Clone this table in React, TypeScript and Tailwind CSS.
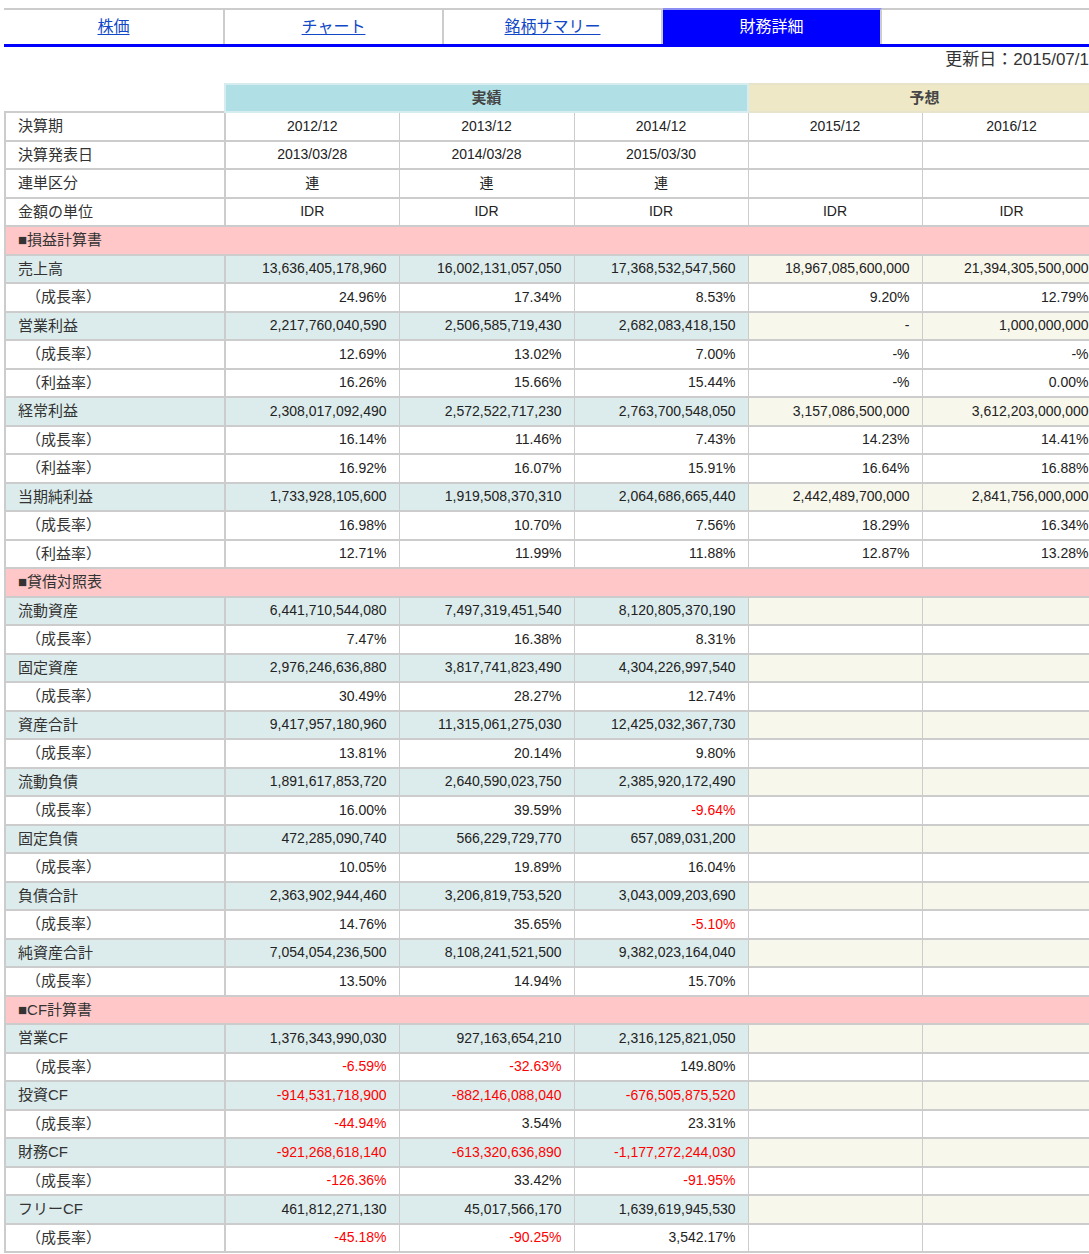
import React from "react";

type Row =
  | { kind: "head"; label: string; values: string[] }
  | { kind: "section"; label: string }
  | { kind: "main"; label: string; values: string[] }
  | { kind: "sub"; label: string; values: string[] };

const G = "（成長率）";
const P = "（利益率）";

const rows: Row[] = [
  { kind: "head", label: "決算期", values: ["2012/12", "2013/12", "2014/12", "2015/12", "2016/12"] },
  { kind: "head", label: "決算発表日", values: ["2013/03/28", "2014/03/28", "2015/03/30", "", ""] },
  { kind: "head", label: "連単区分", values: ["連", "連", "連", "", ""] },
  { kind: "head", label: "金額の単位", values: ["IDR", "IDR", "IDR", "IDR", "IDR"] },
  { kind: "section", label: "■損益計算書" },
  { kind: "main", label: "売上高", values: ["13,636,405,178,960", "16,002,131,057,050", "17,368,532,547,560", "18,967,085,600,000", "21,394,305,500,000"] },
  { kind: "sub", label: G, values: ["24.96%", "17.34%", "8.53%", "9.20%", "12.79%"] },
  { kind: "main", label: "営業利益", values: ["2,217,760,040,590", "2,506,585,719,430", "2,682,083,418,150", "-", "1,000,000,000"] },
  { kind: "sub", label: G, values: ["12.69%", "13.02%", "7.00%", "-%", "-%"] },
  { kind: "sub", label: P, values: ["16.26%", "15.66%", "15.44%", "-%", "0.00%"] },
  { kind: "main", label: "経常利益", values: ["2,308,017,092,490", "2,572,522,717,230", "2,763,700,548,050", "3,157,086,500,000", "3,612,203,000,000"] },
  { kind: "sub", label: G, values: ["16.14%", "11.46%", "7.43%", "14.23%", "14.41%"] },
  { kind: "sub", label: P, values: ["16.92%", "16.07%", "15.91%", "16.64%", "16.88%"] },
  { kind: "main", label: "当期純利益", values: ["1,733,928,105,600", "1,919,508,370,310", "2,064,686,665,440", "2,442,489,700,000", "2,841,756,000,000"] },
  { kind: "sub", label: G, values: ["16.98%", "10.70%", "7.56%", "18.29%", "16.34%"] },
  { kind: "sub", label: P, values: ["12.71%", "11.99%", "11.88%", "12.87%", "13.28%"] },
  { kind: "section", label: "■貸借対照表" },
  { kind: "main", label: "流動資産", values: ["6,441,710,544,080", "7,497,319,451,540", "8,120,805,370,190", "", ""] },
  { kind: "sub", label: G, values: ["7.47%", "16.38%", "8.31%", "", ""] },
  { kind: "main", label: "固定資産", values: ["2,976,246,636,880", "3,817,741,823,490", "4,304,226,997,540", "", ""] },
  { kind: "sub", label: G, values: ["30.49%", "28.27%", "12.74%", "", ""] },
  { kind: "main", label: "資産合計", values: ["9,417,957,180,960", "11,315,061,275,030", "12,425,032,367,730", "", ""] },
  { kind: "sub", label: G, values: ["13.81%", "20.14%", "9.80%", "", ""] },
  { kind: "main", label: "流動負債", values: ["1,891,617,853,720", "2,640,590,023,750", "2,385,920,172,490", "", ""] },
  { kind: "sub", label: G, values: ["16.00%", "39.59%", "-9.64%", "", ""] },
  { kind: "main", label: "固定負債", values: ["472,285,090,740", "566,229,729,770", "657,089,031,200", "", ""] },
  { kind: "sub", label: G, values: ["10.05%", "19.89%", "16.04%", "", ""] },
  { kind: "main", label: "負債合計", values: ["2,363,902,944,460", "3,206,819,753,520", "3,043,009,203,690", "", ""] },
  { kind: "sub", label: G, values: ["14.76%", "35.65%", "-5.10%", "", ""] },
  { kind: "main", label: "純資産合計", values: ["7,054,054,236,500", "8,108,241,521,500", "9,382,023,164,040", "", ""] },
  { kind: "sub", label: G, values: ["13.50%", "14.94%", "15.70%", "", ""] },
  { kind: "section", label: "■CF計算書" },
  { kind: "main", label: "営業CF", values: ["1,376,343,990,030", "927,163,654,210", "2,316,125,821,050", "", ""] },
  { kind: "sub", label: G, values: ["-6.59%", "-32.63%", "149.80%", "", ""] },
  { kind: "main", label: "投資CF", values: ["-914,531,718,900", "-882,146,088,040", "-676,505,875,520", "", ""] },
  { kind: "sub", label: G, values: ["-44.94%", "3.54%", "23.31%", "", ""] },
  { kind: "main", label: "財務CF", values: ["-921,268,618,140", "-613,320,636,890", "-1,177,272,244,030", "", ""] },
  { kind: "sub", label: G, values: ["-126.36%", "33.42%", "-91.95%", "", ""] },
  { kind: "main", label: "フリーCF", values: ["461,812,271,130", "45,017,566,170", "1,639,619,945,530", "", ""] },
  { kind: "sub", label: G, values: ["-45.18%", "-90.25%", "3,542.17%", "", ""] },
];

const tabs = ["株価", "チャート", "銘柄サマリー", "財務詳細"];

function Cell({ v, bg, align }: { v: string; bg: string; align: "right" | "center" }) {
  const red = v.startsWith("-") && v.length > 2;
  return (
    <td
      className={`h-[28.5px] border-x border-y-2 border-[#cccccc] text-[14px] ${bg} ${
        align === "right" ? "text-right pr-3" : "text-center"
      } ${red ? "text-[#ff0000]" : "text-[#222222]"}`}
    >
      {v}
    </td>
  );
}

export default function App() {
  return (
    <div className="w-full overflow-hidden bg-white font-['Liberation_Sans','Noto_Sans_CJK_JP',sans-serif]">
      <div className="w-[1096px] ml-1 pt-2">
        {/* Tabs */}
        <div className="flex h-[39px] border-t-2 border-b-[3px] border-t-[#cccccc] border-b-[#0000ff]">
          {tabs.map((t, i) =>
            i === 3 ? (
              <div
                key={t}
                className="w-[219px] -mt-[2px] flex items-center justify-center bg-[#0000ff] border-t-2 border-t-[#8c8cf5] border-r-2 border-r-[#cccccc] text-white text-[16px]"
              >
                {t}
              </div>
            ) : (
              <div
                key={t}
                className={`${i === 0 ? "w-[221px]" : "w-[219px]"} flex items-center justify-center border-r-2 border-[#cccccc] text-[16px]`}
              >
                <a href="#" className="text-[#1048c8] underline underline-offset-2">
                  {t}
                </a>
              </div>
            )
          )}
          <div className="flex-1" />
        </div>

        {/* Updated date */}
        <div className="h-[26px] pr-[11px] mb-[10px] flex items-center justify-end text-[17px] text-[#333333]">
          更新日：2015/07/1
        </div>

        {/* Table */}
        <table className="table-fixed w-[1096px] border-collapse">
          <colgroup>
            <col className="w-[220px]" />
            <col className="w-[174px]" />
            <col className="w-[175px]" />
            <col className="w-[174px]" />
            <col className="w-[174px]" />
            <col className="w-[179px]" />
          </colgroup>
          <thead>
            <tr>
              <th className="h-[28px] bg-white" />
              <th
                colSpan={3}
                className="h-[28px] bg-[#b0dfe5] border-2 border-[#d6ecee] text-[15px] font-bold text-[#444444]"
              >
                実績
              </th>
              <th
                colSpan={2}
                className="h-[28px] bg-[#eee8c6] border-2 border-[#e8e4cc] text-[15px] font-bold text-[#444444]"
              >
                予想
              </th>
            </tr>
          </thead>
          <tbody>
            {rows.map((r, idx) => {
              if (r.kind === "section") {
                return (
                  <tr key={idx}>
                    <td
                      colSpan={6}
                      className="h-[28.5px] bg-[#ffc7c7] border-y-2 border-l-2 border-[#cccccc] pl-3 text-[15px] text-[#333333]"
                    >
                      {r.label}
                    </td>
                  </tr>
                );
              }
              const labelBg = r.kind === "main" ? "bg-[#dcecec]" : "bg-white";
              return (
                <tr key={idx}>
                  <td
                    className={`h-[28.5px] border-y-2 border-l-2 border-r-2 border-[#cccccc] text-[15px] text-[#333333] ${labelBg} ${
                      r.kind === "sub" ? "pl-[20px]" : "pl-3"
                    }`}
                  >
                    {r.label}
                  </td>
                  {r.values.map((v, j) => {
                    const bg =
                      r.kind === "main" ? (j < 3 ? "bg-[#dcecec]" : "bg-[#f7f7ec]") : "bg-white";
                    return (
                      <Cell key={j} v={v} bg={bg} align={r.kind === "head" ? "center" : "right"} />
                    );
                  })}
                </tr>
              );
            })}
          </tbody>
        </table>
      </div>
    </div>
  );
}
